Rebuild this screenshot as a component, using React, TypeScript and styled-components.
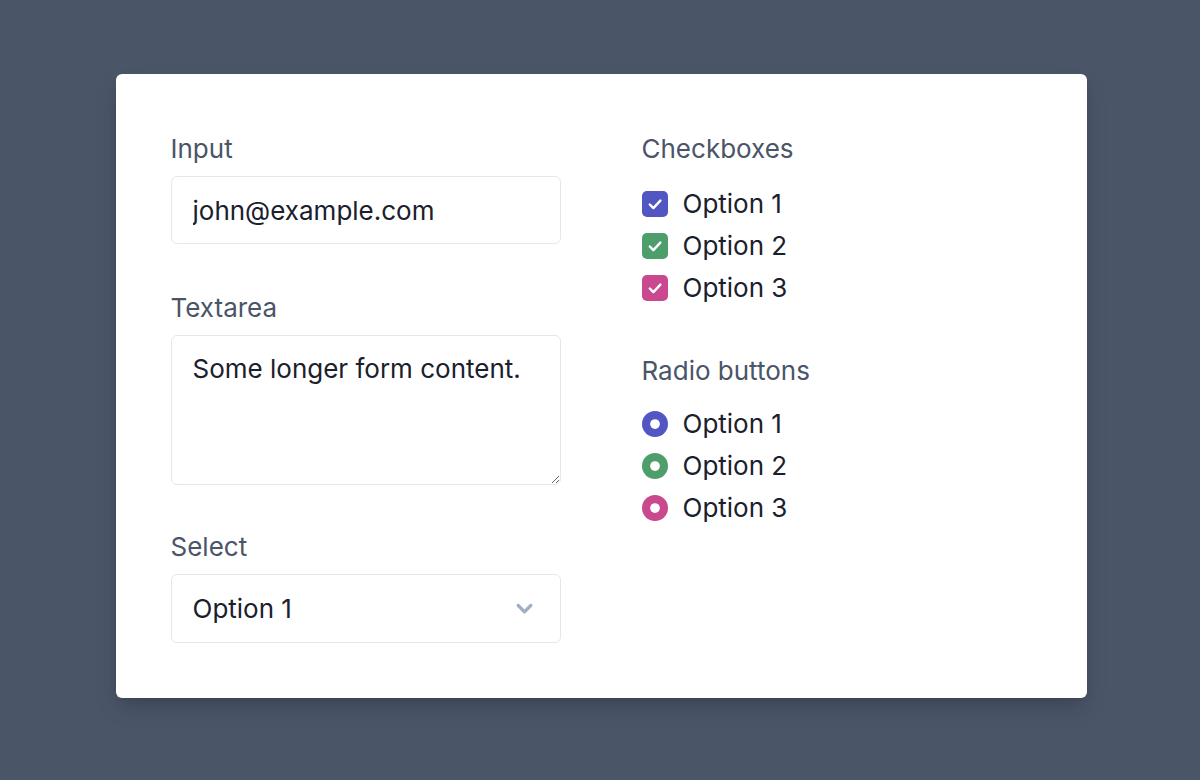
import React from 'react';
import styled, { createGlobalStyle } from 'styled-components';

const GlobalStyle = createGlobalStyle`
  html, body {
    margin: 0;
    padding: 0;
    background-color: #4a5568;
    font-family: Inter, "Noto Sans", "Liberation Sans", sans-serif;
    -webkit-font-smoothing: antialiased;
  }
  * {
    box-sizing: border-box;
  }
`;

const colors = {
  indigo: '#5156c2',
  green: '#4e9e6c',
  pink: '#c9488e',
  label: '#4a5568',
  text: '#1a202c',
  border: '#e2e8f0',
  chevron: '#a0aec0',
};

const checkSvg = encodeURIComponent(
  '<svg viewBox="0 0 16 16" fill="none" stroke="white" stroke-width="1.5" stroke-linecap="round" stroke-linejoin="round" xmlns="http://www.w3.org/2000/svg"><path d="M4.8 8.3l2.2 2.2 4.3-4.6"/></svg>'
);

const dotSvg = encodeURIComponent(
  '<svg viewBox="0 0 16 16" fill="white" xmlns="http://www.w3.org/2000/svg"><circle cx="8" cy="8" r="3"/></svg>'
);

const chevronSvg = encodeURIComponent(
  `<svg xmlns="http://www.w3.org/2000/svg" viewBox="0 0 24 24" fill="${colors.chevron}"><path d="M15.3 9.3a1 1 0 0 1 1.4 1.4l-4 4a1 1 0 0 1-1.4 0l-4-4a1 1 0 0 1 1.4-1.4l3.3 3.29 3.3-3.3z"/></svg>`
);

const Page = styled.div`
  width: 1200px;
  height: 780px;
  padding-top: 74px;
  display: flex;
  justify-content: center;
  align-items: flex-start;
`;

const Card = styled.div`
  width: 971px;
  margin-left: 2px;
  background-color: #fff;
  border-radius: 6px;
  box-shadow: 0 12px 24px -4px rgba(0, 0, 0, 0.18), 0 4px 8px -2px rgba(0, 0, 0, 0.08);
  padding: 55px;
  display: grid;
  grid-template-columns: 390px 390px;
  column-gap: 81px;
`;

const Column = styled.div`
  display: flex;
  flex-direction: column;
`;

const Field = styled.label<{ $gap?: number }>`
  display: block;
  margin-top: ${(p) => p.$gap ?? 0}px;
`;

const Label = styled.span`
  display: block;
  font-size: 26px;
  line-height: 39px;
  color: ${colors.label};
`;

const fieldBase = `
  display: block;
  width: 100%;
  margin-top: 8px;
  font-family: inherit;
  font-size: 26px;
  line-height: 39px;
  color: ${colors.text};
  background-color: #fff;
  border: 1px solid ${colors.border};
  border-radius: 6px;
  padding: 13px 21px;
  outline: none;
`;

const TextInput = styled.input`
  ${fieldBase}
  height: 68px;
`;

const TextArea = styled.textarea`
  ${fieldBase}
  height: 150px;
  resize: vertical;
`;

const Select = styled.select`
  ${fieldBase}
  height: 69px;
  appearance: none;
  -webkit-appearance: none;
  background-image: url("data:image/svg+xml,${chevronSvg}");
  background-repeat: no-repeat;
  background-position: right 16px center;
  background-size: 39px 39px;
`;

const Group = styled.div<{ $gap?: number }>`
  margin-top: ${(p) => p.$gap ?? 0}px;
  display: flex;
  flex-direction: column;
`;

const OptionList = styled.div<{ $offset: number }>`
  margin-top: ${(p) => p.$offset}px;
  display: flex;
  flex-direction: column;
  gap: 3px;
`;

const OptionRow = styled.label`
  display: flex;
  align-items: center;
  height: 39px;
`;

const controlBase = `
  appearance: none;
  -webkit-appearance: none;
  margin: 0;
  width: 26px;
  height: 26px;
  flex-shrink: 0;
  background-repeat: no-repeat;
  background-position: center;
  background-size: 100% 100%;
`;

const Checkbox = styled.input.attrs({ type: 'checkbox' })<{ $color: string }>`
  ${controlBase}
  border-radius: 5px;
  background-color: ${(p) => p.$color};
  background-image: url("data:image/svg+xml,${checkSvg}");
`;

const Radio = styled.input.attrs({ type: 'radio' })<{ $color: string }>`
  ${controlBase}
  border-radius: 50%;
  background-color: ${(p) => p.$color};
  background-image: url("data:image/svg+xml,${dotSvg}");
`;

const OptionText = styled.span`
  margin-left: 15px;
  font-size: 26px;
  line-height: 39px;
  color: ${colors.text};
`;

const options = [
  { name: 'Option 1', color: colors.indigo },
  { name: 'Option 2', color: colors.green },
  { name: 'Option 3', color: colors.pink },
];

export default function App() {
  return (
    <>
      <GlobalStyle />
      <Page>
        <Card>
          <Column>
            <Field>
              <Label>Input</Label>
              <TextInput type="email" defaultValue="john@example.com" />
            </Field>
            <Field $gap={44}>
              <Label>Textarea</Label>
              <TextArea rows={3} defaultValue="Some longer form content." />
            </Field>
            <Field $gap={42}>
              <Label>Select</Label>
              <Select defaultValue="Option 1">
                <option>Option 1</option>
                <option>Option 2</option>
                <option>Option 3</option>
              </Select>
            </Field>
          </Column>
          <Column>
            <Group>
              <Label>Checkboxes</Label>
              <OptionList $offset={16}>
                {options.map((o) => (
                  <OptionRow key={o.name}>
                    <Checkbox $color={o.color} defaultChecked />
                    <OptionText>{o.name}</OptionText>
                  </OptionRow>
                ))}
              </OptionList>
            </Group>
            <Group $gap={44}>
              <Label>Radio buttons</Label>
              <OptionList $offset={14}>
                {options.map((o) => (
                  <OptionRow key={o.name}>
                    <Radio $color={o.color} name={`radio-${o.name}`} defaultChecked />
                    <OptionText>{o.name}</OptionText>
                  </OptionRow>
                ))}
              </OptionList>
            </Group>
          </Column>
        </Card>
      </Page>
    </>
  );
}
